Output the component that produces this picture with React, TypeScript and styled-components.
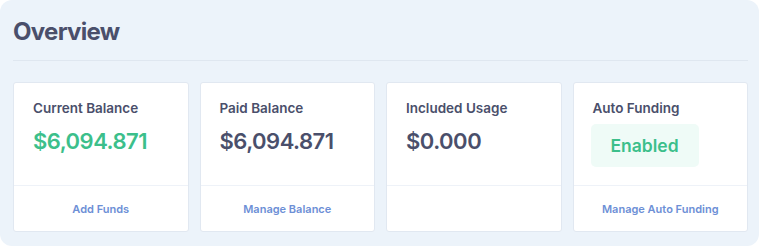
import React from "react";
import { createGlobalStyle, styled } from "styled-components";

const GlobalStyle = createGlobalStyle`
  body {
    margin: 0;
    background: #ffffff;
    font-family: Inter, "Liberation Sans", sans-serif;
  }
`;

type Card = {
  title: string;
  value?: string;
  green?: boolean;
  badge?: string;
  link?: string;
};

const cards: Card[] = [
  { title: "Current Balance", value: "$6,094.871", green: true, link: "Add Funds" },
  { title: "Paid Balance", value: "$6,094.871", link: "Manage Balance" },
  { title: "Included Usage", value: "$0.000" },
  { title: "Auto Funding", badge: "Enabled", link: "Manage Auto Funding" },
];

const App = (): JSX.Element => {
  return (
    <>
      <GlobalStyle />
      <Container>
        <Header>
          <h1>Overview</h1>
        </Header>
        <Grid>
          {cards.map((c) => (
            <CardBox key={c.title}>
              <CardBody>
                <CardTitle>{c.title}</CardTitle>
                {c.value && <Amount $green={c.green}>{c.value}</Amount>}
                {c.badge && <Badge>{c.badge}</Badge>}
              </CardBody>
              {c.link && (
                <CardFooter>
                  <a>{c.link}</a>
                </CardFooter>
              )}
            </CardBox>
          ))}
        </Grid>
      </Container>
    </>
  );
};

export default App;

const Container = styled.section`
  width: 759px;
  box-sizing: border-box;
  padding: 0 11px 14px 13px;
  background: #ecf3fa;
  border-radius: 12px;
`;

const Header = styled.header`
  padding-top: 17px;
  padding-bottom: 13px;
  border-bottom: 1px solid #dfe7f0;

  h1 {
    margin: 0;
    font-size: 24px;
    line-height: 30px;
    font-weight: 700;
    color: #4a4f6b;
    letter-spacing: -0.7px;
  }
`;

const Grid = styled.div`
  display: grid;
  grid-template-columns: repeat(4, 1fr);
  column-gap: 11px;
  margin-top: 21px;
`;

const CardBox = styled.div`
  height: 150px;
  box-sizing: border-box;
  display: flex;
  flex-direction: column;
  background: #ffffff;
  border: 1px solid #e1e8f1;
  border-radius: 3px;
`;

const CardBody = styled.div`
  height: 103px;
  box-sizing: border-box;
  padding: 17px 18px 0 19px;
  border-bottom: 1px solid #eef2f8;
  display: flex;
  flex-direction: column;
  align-items: flex-start;
`;

const CardTitle = styled.div`
  font-size: 13.5px;
  line-height: 17px;
  font-weight: 600;
  color: #4a4f6b;
`;

const Amount = styled.div<{ $green?: boolean }>`
  margin-top: 11px;
  font-size: 22px;
  line-height: 27px;
  font-weight: 600;
  letter-spacing: -0.5px;
  color: ${(p) => (p.$green ? "#3cbf8b" : "#4a4f6b")};
`;

const Badge = styled.div`
  margin-top: 7px;
  margin-left: -2px;
  width: 108px;
  height: 43px;
  display: flex;
  align-items: center;
  justify-content: center;
  border-radius: 5px;
  background: #effbf7;
  color: #3cbf8b;
  font-size: 17.5px;
  font-weight: 600;
`;

const CardFooter = styled.div`
  flex: 1;
  display: flex;
  align-items: center;
  justify-content: center;

  a {
    font-size: 11px;
    font-weight: 600;
    color: #6d8fd6;
    cursor: pointer;
  }
`;
